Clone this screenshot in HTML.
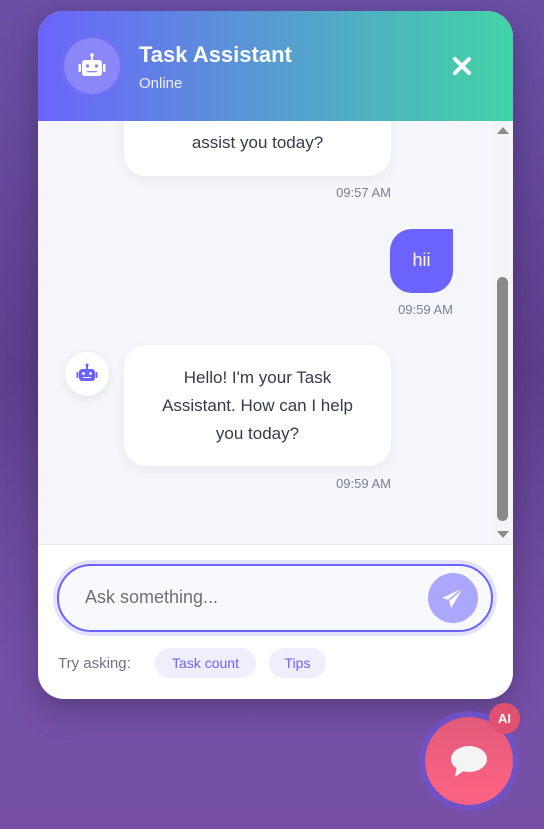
<!DOCTYPE html>
<html><head><meta charset="utf-8"><style>
*{box-sizing:border-box;margin:0;padding:0}
body{width:544px;height:829px;overflow:hidden;background:linear-gradient(180deg,#6a4fa6 0%,#5d3f8c 45%,#7450a8 80%,#774fa6 100%);font-family:"Liberation Sans",sans-serif;position:relative}
.panel{position:absolute;left:38px;top:11px;width:475px;height:688px;border-radius:26px;background:#fff;overflow:hidden;box-shadow:0 10px 30px rgba(0,0,0,.25)}
.head{position:absolute;left:0;top:0;width:475px;height:110px;background:linear-gradient(90deg,#6b64fb,#42d4a5)}
.av{position:absolute;left:26px;top:27px;width:56px;height:56px;border-radius:50%;background:#8b87f8;box-shadow:0 0 0 4px rgba(120,110,250,.4)}
.t1{position:absolute;left:101px;top:31px;color:#fff;font-weight:bold;font-size:22px}
.t2{position:absolute;left:101px;top:64px;color:#eef;font-size:15px}
.msgs{position:absolute;left:0;top:110px;width:475px;height:423px;background:#f5f6fc}
.bub{position:absolute;background:#fff;border-radius:22px;box-shadow:0 4px 12px rgba(0,0,0,.05);color:#333a4a;font-size:17px;text-align:center;line-height:28px}
.time{position:absolute;color:#7a8090;font-size:13px;text-align:right;width:100px}
.sb{position:absolute;left:456px;top:0;width:17px;height:423px;background:#f5f5f8}
.thumb{position:absolute;left:3px;top:156px;width:11px;height:244px;border-radius:6px;background:#8a8a8a}
.inp{position:absolute;left:19px;top:553px;width:436px;height:68px;border:2px solid #6c63ff;border-radius:34px;background:#f8f9ff;box-shadow:0 0 0 4px #e4e3fd}
.chip{position:absolute;top:637px;height:30px;border-radius:15px;background:#efeefd;color:#6c63ff;font-size:14px;line-height:30px;text-align:center}
</style></head><body>
<div class="panel">
 <div class="msgs">
  <div class="bub" style="left:86px;top:-30px;width:267px;height:85px;padding-top:10px">to-do list. How can I<br>assist you today?</div>
  <div class="time" style="left:253px;top:64px">09:57 AM</div>
  <div style="position:absolute;left:352px;top:108px;width:63px;height:64px;background:#6c63ff;border-radius:22px 0 22px 22px;color:#fff;font-size:18px;text-align:center;line-height:62px">hii</div>
  <div class="time" style="left:315px;top:181px">09:59 AM</div>
  <div style="position:absolute;left:27px;top:231px;width:44px;height:44px;border-radius:50%;background:#fff;box-shadow:0 3px 10px rgba(0,0,0,.08)">
   <svg width="44" height="44" viewBox="0 0 44 44"><rect x="14" y="17" width="16" height="12" rx="3" fill="#6c63ff"/><rect x="11.5" y="20" width="2" height="6" rx="1" fill="#6c63ff"/><rect x="30.5" y="20" width="2" height="6" rx="1" fill="#6c63ff"/><rect x="21" y="13" width="2" height="4" fill="#6c63ff"/><circle cx="22" cy="13" r="1.5" fill="#6c63ff"/><circle cx="18.5" cy="21.5" r="1.4" fill="#fff"/><circle cx="25.5" cy="21.5" r="1.4" fill="#fff"/><rect x="18" y="25" width="8" height="1" fill="#fff"/></svg>
  </div>
  <div class="bub" style="left:86px;top:224px;width:267px;height:121px;padding-top:19px">Hello! I'm your Task<br>Assistant. How can I help<br>you today?</div>
  <div class="time" style="left:253px;top:355px">09:59 AM</div>
  <div class="sb"><div style="position:absolute;left:3px;top:6px;border-left:6px solid transparent;border-right:6px solid transparent;border-bottom:7px solid #8a8a8a"></div><div class="thumb"></div><div style="position:absolute;left:3px;top:410px;border-left:6px solid transparent;border-right:6px solid transparent;border-top:7px solid #8a8a8a"></div></div>
 </div>
 <div class="head">
  <div class="av"><svg width="56" height="56" viewBox="0 0 56 56"><rect x="18" y="22" width="20" height="16" rx="3" fill="#fff"/><rect x="14.5" y="26" width="2.5" height="8" rx="1" fill="#fff"/><rect x="39" y="26" width="2.5" height="8" rx="1" fill="#fff"/><rect x="27" y="17" width="2" height="5" fill="#fff"/><circle cx="28" cy="17" r="1.8" fill="#fff"/><circle cx="23.5" cy="28" r="1.7" fill="#8b87f8"/><circle cx="32.5" cy="28" r="1.7" fill="#8b87f8"/><rect x="23" y="33" width="10" height="1.3" fill="#8b87f8"/></svg></div>
  <div class="t1">Task Assistant</div>
  <div class="t2">Online</div>
  <svg style="position:absolute;left:414px;top:45px" width="20" height="20" viewBox="0 0 20 20"><path d="M3 3L17 17M17 3L3 17" stroke="#fff" stroke-width="4" stroke-linecap="round"/></svg>
 </div>
 <div style="position:absolute;left:0;top:533px;width:475px;height:1px;background:#e8e9f0"></div>
 <div class="inp">
  <div style="position:absolute;left:26px;top:21px;color:#707070;font-size:18px">Ask something...</div>
  <div style="position:absolute;left:369px;top:7px;width:50px;height:50px;border-radius:50%;background:#aba8fb">
   <svg width="50" height="50" viewBox="0 0 50 50"><path d="M35 15L14 25L21 27L23 35Z" fill="#fff"/><path d="M21 27L35 15" stroke="#aba8fb" stroke-width="1.5"/></svg>
  </div>
 </div>
 <div style="position:absolute;left:20px;top:644px;color:#6c7488;font-size:15px">Try asking:</div>
 <div class="chip" style="left:117px;width:101px">Task count</div>
 <div class="chip" style="left:231px;width:57px">Tips</div>
</div>
<div style="position:absolute;left:419px;top:711px;width:100px;height:100px;border-radius:50%;background:#6f52c8;opacity:.9"></div>
<div style="position:absolute;left:425px;top:717px;width:88px;height:88px;border-radius:50%;background:linear-gradient(180deg,#e25a7a,#ff6384)">
 <svg width="88" height="88" viewBox="0 0 88 88"><ellipse cx="44" cy="42" rx="18" ry="13" fill="#f4f4f4"/><path d="M32 49L30 60L40 53Z" fill="#f4f4f4"/></svg>
</div>
<div style="position:absolute;left:489px;top:703px;width:31px;height:31px;border-radius:50%;background:#e0506f;color:#fff;font-weight:bold;font-size:13px;text-align:center;line-height:31px">AI</div>
</body></html>
